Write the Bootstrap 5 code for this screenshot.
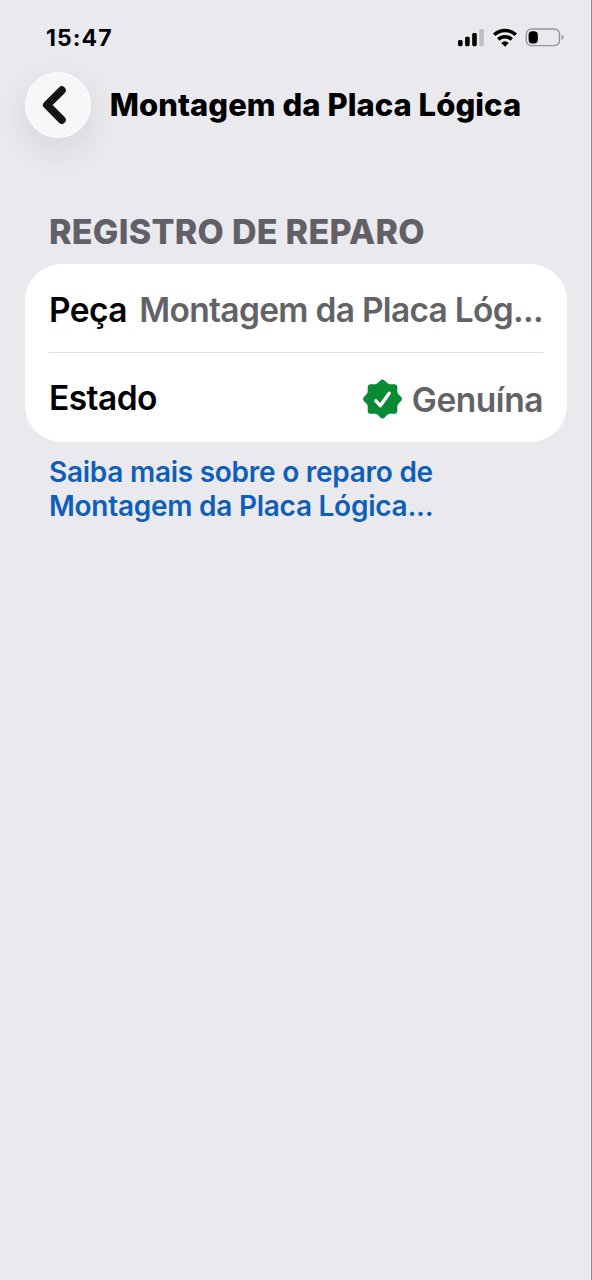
<!DOCTYPE html>
<html lang="pt-BR">
<head>
<meta charset="utf-8">
<meta name="viewport" content="width=device-width, initial-scale=1">
<title>Montagem da Placa Lógica</title>
<link href="https://cdn.jsdelivr.net/npm/bootstrap@5.3.0/dist/css/bootstrap.min.css" rel="stylesheet">
<style>
body { background: #eae9ee; color: #000; font-family: Inter, "Liberation Sans", sans-serif; }
.screen { height: 1280px; border-right: 1px solid #8b8a90; box-shadow: inset -1px 0 #f6f5fa; }
.status-bar { height: 72px; padding: 0 26px 0 46px; }
.clock { font-size: 23px; font-weight: 750; line-height: 30px; margin-top: 23px; letter-spacing: 1.1px; }
.status-icons { margin-top: 26px; }
.top-bar { height: 66px; padding-left: 25px; gap: 18.8px; }
.back { width: 66px; height: 66px; background: #f7f7f9; border: 1px solid #fff; box-shadow: 0 12px 34px rgba(40,40,60,.1); }
.page-title { font-size: 31px; font-weight: 800; line-height: 40px; letter-spacing: .04px; }
.section-title { font-size: 34px; font-weight: 790; line-height: 40px; letter-spacing: .3px; color: #606066; margin: 74px 0 12px 49px; }
.repair { margin: 0 24px 0 25px; height: 178px; border-radius: 37px; padding: 0 24px; }
.line { height: 88px; font-size: 33.5px; font-weight: 570; line-height: 44px; letter-spacing: -.55px; padding-top: 3px; }
.line + .line { height: 90px; border-top: 1px solid #dededf; padding-top: 0; }
.grey { color: #636366; }
.value { letter-spacing: -.7px; }
.genuine { padding-top: 3px; letter-spacing: -.45px; }
.genuine span { padding-top: 1px; }
.more { margin: 14px 0 0 49px; font-size: 28px; font-weight: 570; line-height: 33.5px; letter-spacing: -.26px; color: #0f5fb8; }
</style>
</head>
<body>
<div class="screen">
  <header class="status-bar d-flex justify-content-between align-items-start">
    <span class="clock">15:47</span>
    <svg class="status-icons" width="107" height="24" viewBox="0 0 107 24" aria-hidden="true">
      <rect x="0" y="14" width="4.6" height="6.2" rx="1.4"/>
      <rect x="7.1" y="10.8" width="4.6" height="9.4" rx="1.4"/>
      <rect x="14.2" y="7" width="4.6" height="13.2" rx="1.4"/>
      <rect x="21.3" y="3" width="4.6" height="17.2" rx="1.4" fill="#bebdc2"/>
      <g fill="none" stroke="#000" stroke-width="3.5">
        <path d="M36.2 8.8a15.5 15.5 0 0 1 21.6 0"/>
        <path d="M40.2 13.4a10 10 0 0 1 13.6 0"/>
      </g>
      <path d="M43.2 17a5.8 5.8 0 0 1 7.6 0L47 20.8z"/>
      <rect x="68.3" y="3" width="33.2" height="16.6" rx="5.2" fill="none" stroke="#96959a" stroke-width="1.4"/>
      <rect x="70.6" y="5.2" width="9.2" height="12.2" rx="3.6"/>
      <path d="M103.6 8.6q2 .7 2 2.7t-2 2.7z" fill="#96959a"/>
    </svg>
  </header>
  <nav class="top-bar d-flex align-items-center">
    <button class="back btn rounded-circle p-0 d-flex align-items-center justify-content-center flex-shrink-0" type="button" aria-label="Voltar">
      <svg width="64" height="64" viewBox="0 0 64 64" fill="none" stroke="#151517" stroke-width="8" stroke-linecap="round" stroke-linejoin="round"><path d="M35.8 17.3 21 32l14.8 14.8"/></svg>
    </button>
    <h1 class="page-title mb-0 text-nowrap">Montagem da Placa Lógica</h1>
  </nav>
  <main>
    <h2 class="section-title text-nowrap">REGISTRO DE REPARO</h2>
    <div class="repair bg-white">
      <div class="line d-flex align-items-center justify-content-between text-nowrap">
        <span>Peça</span><span class="grey value">Montagem da Placa Lóg...</span>
      </div>
      <div class="line d-flex align-items-center justify-content-between text-nowrap">
        <span>Estado</span>
        <span class="d-flex align-items-center grey genuine">
          <svg class="me-2" width="42" height="42" viewBox="-20.5 -21 42 42" aria-hidden="true">
            <path d="M0-16.2Q3.4-12 6.6-11.7H11.7V-6.6Q12-3.4 16.2 0Q12 3.4 11.7 6.6V11.7H6.6Q3.4 12 0 16.2Q-3.4 12-6.6 11.7H-11.7V6.6Q-12 3.4-16.2 0Q-12-3.4-11.7-6.6V-11.7H-6.6Q-3.4-12 0-16.2z" fill="#088b32" stroke="#088b32" stroke-width="6.2" stroke-linejoin="round"/>
            <path d="M-6.6 1.8-2.2 6.7 6.7-5.8" fill="none" stroke="#fff" stroke-width="3.4" stroke-linecap="round" stroke-linejoin="round"/>
          </svg><span>Genuína</span>
        </span>
      </div>
    </div>
    <a class="more d-block text-decoration-none" href="#">Saiba mais sobre o reparo de<br>Montagem da Placa Lógica...</a>
  </main>
</div>
<script src="https://cdn.jsdelivr.net/npm/bootstrap@5.3.0/dist/js/bootstrap.bundle.min.js"></script>
</body>
</html>
